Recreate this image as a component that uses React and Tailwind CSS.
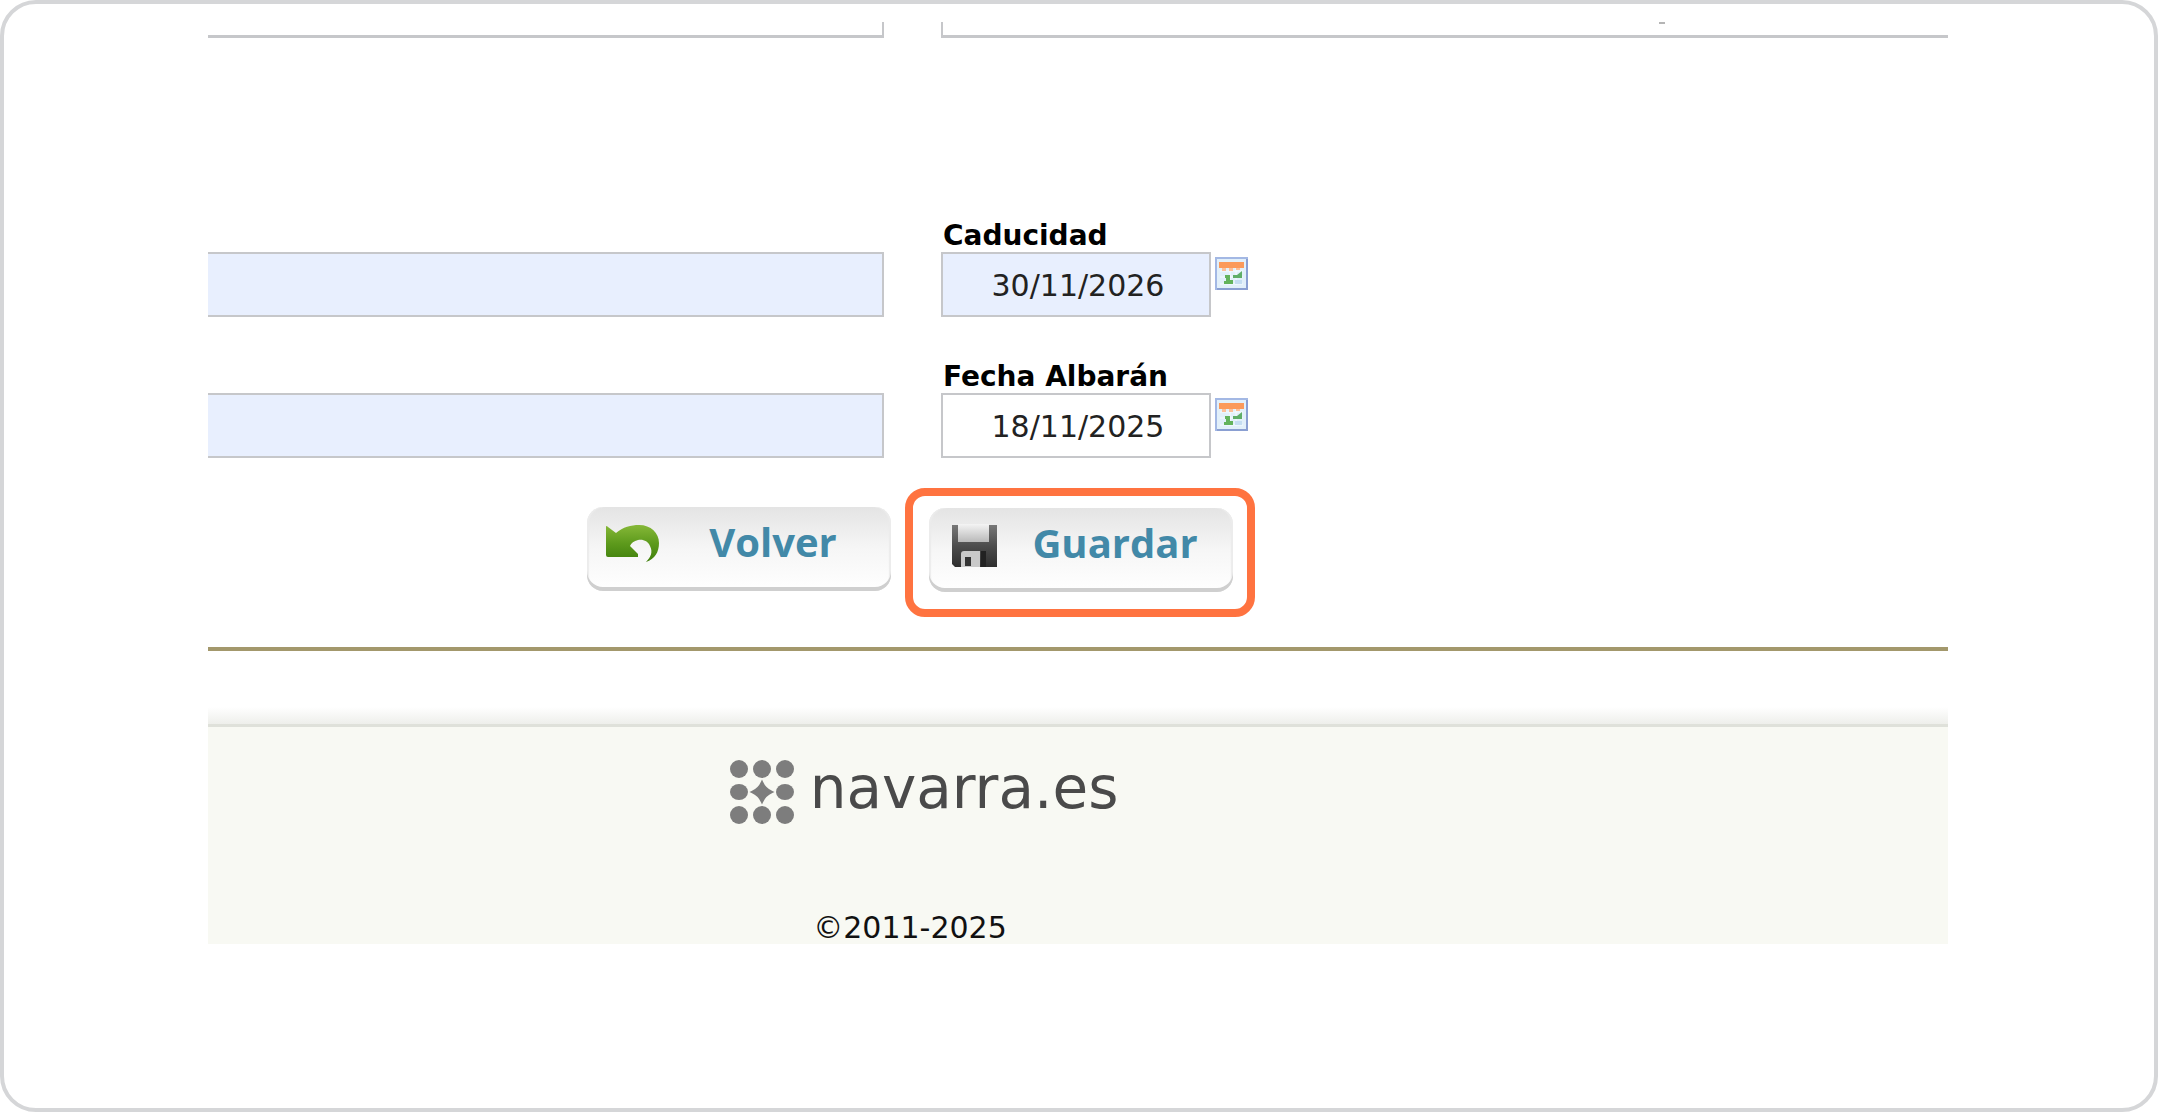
import React, { useState } from "react";

const inputBase =
  "h-[65px] border-[2px] border-[#c6c7ca] font-['DejaVu_Sans',Verdana,sans-serif] text-[30px] text-[#222222] outline-none";

const CalendarIcon = () => (
  <svg viewBox="0 0 33 33" className="block size-[33px]" aria-hidden="true">
    <rect x="1" y="1" width="31" height="31" fill="#e2f0fa" stroke="#a3b8e4" strokeWidth="2" />
    <path d="M2 32H32V2" fill="none" stroke="#8a9fd2" strokeWidth="2" />
    <path d="M5 14H28M5 20H28M5 27H28" stroke="#f6fbff" strokeWidth="1" />
    <path d="M15 11V28M21 11V28" stroke="#f6fbff" strokeWidth="1" />
    <rect x="4" y="5" width="25" height="6" fill="#fb9a5b" />
    <path d="M7 11h4v3h-4zM14 11h4v3h-4zM21 11h4v2h-4z" fill="#fcc09a" />
    <path d="M27 14V21H18V18H22Z" fill="#5fae68" />
    <path d="M10 18H15V23H18V27H9V24H11V21H10Z" fill="#63b35c" />
    <path d="M20 23h7v4h-7z" fill="#c5def2" />
  </svg>
);

const BackIcon = () => (
  <svg viewBox="0 0 54 48" className="h-12 w-[54px] shrink-0" aria-hidden="true">
    <defs>
      <linearGradient id="back" x1="0" y1="0" x2="0" y2="1">
        <stop offset="0" stopColor="#86b838" />
        <stop offset="0.5" stopColor="#5d9a1c" />
        <stop offset="1" stopColor="#3f7f0c" />
      </linearGradient>
    </defs>
    <path
      d="M1 6Q1 4 3 6L11 12C18 6 26 4 34 4C46 4 54 12 54 22C54 31 50 38 41 41C46 36 48 31 45 25C43 20 38 18 33 19C29 20 26 22 25 25L33 33V36H3Q1 36 1 34Z"
      fill="url(#back)"
    />
  </svg>
);

const SaveIcon = () => (
  <svg viewBox="0 0 54 48" className="h-12 w-[54px] shrink-0" aria-hidden="true">
    <defs>
      <linearGradient id="disk" x1="0" y1="0" x2="0" y2="1">
        <stop offset="0" stopColor="#777777" />
        <stop offset="0.5" stopColor="#4c4c4c" />
        <stop offset="1" stopColor="#2e2e2e" />
      </linearGradient>
      <linearGradient id="plate" x1="0" y1="0" x2="0" y2="1">
        <stop offset="0" stopColor="#f4f4f4" />
        <stop offset="1" stopColor="#b9b9b9" />
      </linearGradient>
    </defs>
    <path d="M5 3H50V45H8L5 42Z" fill="url(#disk)" />
    <rect x="11" y="2" width="31" height="18" fill="url(#plate)" />
    <path d="M14 45V32Q14 29 17 29H33V45Z" fill="#c9c9c9" />
    <path d="M18 44V35H24V44Z" fill="#333333" />
    <path d="M34 29H39V45H34Z" fill="#222222" />
  </svg>
);

const LogoDots = () => (
  <svg viewBox="0 0 64 64" className="size-16 shrink-0" aria-hidden="true">
    <g fill="#7d7d7d">
      <circle cx="9" cy="9" r="9" />
      <circle cx="32" cy="9" r="9" />
      <circle cx="55" cy="9" r="9" />
      <ellipse cx="9" cy="32" rx="9" ry="8" />
      <path d="M32 22Q35 29 42 32Q35 35 32 42Q29 35 22 32Q29 29 32 22Z" stroke="#7d7d7d" strokeWidth="2" />
      <ellipse cx="55" cy="32" rx="9" ry="8" />
      <circle cx="9" cy="55" r="9" />
      <circle cx="32" cy="55" r="9" />
      <circle cx="55" cy="55" r="9" />
    </g>
  </svg>
);

const DateField = ({ id, label, initial, filled }) => {
  const [value, setValue] = useState(initial);
  return (
    <div>
      <label htmlFor={id} className="block pl-0.5 text-[28px] leading-8 font-bold text-black">
        {label}
      </label>
      <div className="flex items-start gap-1">
        <input
          id={id}
          type="text"
          value={value}
          onChange={(e) => setValue(e.target.value)}
          className={`${inputBase} w-[270px] pt-0.5 pl-1 text-center ${filled ? "bg-[#e8effe]" : "bg-white"}`}
        />
        <button type="button" aria-label={`Abrir calendario: ${label}`} className="mt-[5px] cursor-pointer">
          <CalendarIcon />
        </button>
      </div>
    </div>
  );
};

const ActionButton = ({ icon, label }) => (
  <button
    type="button"
    className="flex h-[84px] w-[304px] cursor-pointer items-start rounded-[16px] bg-linear-to-b from-[#e4e4e4] via-[#f6f6f6] to-white pt-[14px] pl-[18px] shadow-[inset_0_-4px_0_#cfcfcf,inset_2px_0_1px_#ececec,inset_-2px_0_1px_#ececec]"
  >
    {icon}
    <span className="flex-1 pr-1 text-center font-['Open_Sans',sans-serif] text-[40px] leading-[42px] font-bold text-[#4289a8]">
      {label}
    </span>
  </button>
);

export default function App() {
  return (
    <div className="min-h-screen rounded-[36px] border-4 border-[#d5d6d8] bg-white pt-[18px] pr-[206px] pl-[204px] font-['DejaVu_Sans',Verdana,sans-serif]">
      <main>
        {/* bottom edge of the previous row of fields */}
        <div className="grid h-4 grid-cols-[676px_minmax(0,1fr)] content-end gap-x-[57px] overflow-hidden">
          <input
            type="text"
            aria-label="Campo anterior"
            className={`${inputBase} block w-full border-b-[3px] border-l-0`}
          />
          <div className="relative">
            <input
              type="text"
              aria-label="Observaciones"
              className={`${inputBase} block w-full border-r-0 border-b-[3px]`}
            />
            <span className="absolute right-[283px] bottom-[14px] h-0.5 w-1.5 bg-[#b5b5b5]" />
          </div>
        </div>

        <div className="mt-[182px] grid grid-cols-[676px_minmax(0,1fr)] items-end gap-x-[57px] gap-y-11">
          <input type="text" aria-label="Lote" className={`${inputBase} w-full border-l-0 bg-[#e8effe]`} />
          <DateField id="caducidad" label="Caducidad" initial="30/11/2026" filled />
          <input type="text" aria-label="Albarán" className={`${inputBase} w-full border-l-0 bg-[#e8effe]`} />
          <DateField id="fecha-albaran" label="Fecha Albarán" initial="18/11/2025" />
        </div>

        <div className="mt-[30px] flex max-w-[1426px] items-center justify-center gap-[14px]">
          <div className="mb-2">
            <ActionButton icon={<BackIcon />} label="Volver" />
          </div>
          <div className="rounded-[20px] border-8 border-[#ff7340] pt-3 pr-[14px] pb-[17px] pl-4">
            <ActionButton icon={<SaveIcon />} label="Guardar" />
          </div>
        </div>

        <hr className="mt-[30px] h-[4px] border-0 bg-[#a3986c]" />
      </main>

      <div className="mt-[56px] h-[17px] bg-linear-to-b from-white to-[#eeefeb]" />
      <footer className="border-t-[3px] border-[#dfe1da] bg-[#f8f9f3] pt-[33px]">
        <div className="flex max-w-[1432px] flex-col items-center">
          <div className="flex items-start gap-4">
            <LogoDots />
            <span className="text-[58px] leading-[56px] text-[#4a4a4a]">navarra.es</span>
          </div>
          <p className="mt-[88px] pr-7 text-[30px] leading-8 text-[#111111]">©2011-2025</p>
        </div>
      </footer>
    </div>
  );
}
